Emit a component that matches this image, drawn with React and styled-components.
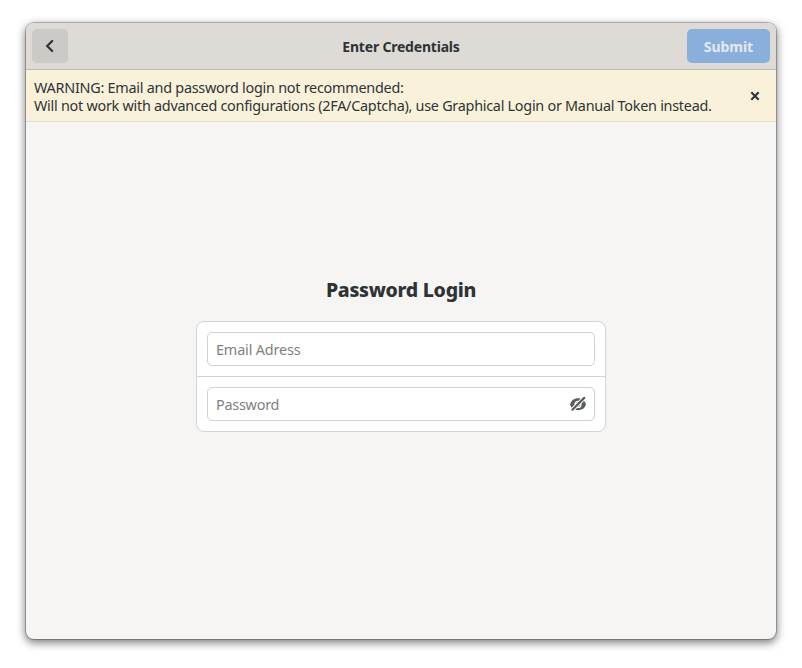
import React from "react";
import styled, { createGlobalStyle } from "styled-components";

const GlobalStyle = createGlobalStyle`
  * { box-sizing: border-box; }
  body { margin: 0; background: #fff; overflow: hidden; }
  button, input { font: inherit; }
`;

const Desktop = styled.div`
  width: 802px;
  height: 668px;
  padding: 23px 26px 29px;
  font-family: "Noto Sans", "Open Sans", sans-serif;
  font-size: 14.4px;
  color: #2e3436;
`;

const Window = styled.main`
  display: flex;
  flex-direction: column;
  height: 616px;
  border-radius: 8px;
  overflow: hidden;
  background: #f6f5f4;
  box-shadow: 0 3px 9px 1px rgba(0, 0, 0, 0.5), 0 0 0 1px rgba(0, 0, 0, 0.23);
`;

const HeaderBar = styled.header`
  display: grid;
  grid-template-columns: 1fr auto 1fr;
  align-items: center;
  flex: none;
  height: 47px;
  padding: 0 6px;
  background: #dedbd7;
  border-bottom: 1px solid #bfb8b1;
`;

const Title = styled.h1`
  margin: 0;
  padding-top: 1px;
  font-size: 14px;
  line-height: 21px;
  font-weight: 700;
  letter-spacing: -0.2px;
`;

const HeaderButton = styled.button`
  display: flex;
  align-items: center;
  justify-content: center;
  height: 34px;
  padding: 0;
  border: 0;
  border-radius: 5px;
`;

const BackButton = styled(HeaderButton)`
  width: 36px;
  background: #cccac6;
  color: #2e3436;
`;

const SubmitButton = styled(HeaderButton)`
  justify-self: end;
  width: 83px;
  background: #8bafdd;
  color: #e4e9ef;
  font-size: 14px;
  font-weight: 700;
  letter-spacing: -0.05px;
`;

const Banner = styled.section`
  display: flex;
  align-items: center;
  flex: none;
  height: 52px;
  padding: 1px 13px 0 8px;
  background: #faf1da;
  border-bottom: 1px solid #e5dcc5;
`;

const BannerText = styled.p`
  flex: 1;
  margin: 0;
  padding-top: 2px;
  line-height: 18px;
  white-space: nowrap;
`;

const Line = styled.span`
  display: block;
  letter-spacing: ${(p) => p.$tracking}px;
`;

const CloseButton = styled.button`
  display: flex;
  width: 16px;
  height: 16px;
  padding: 0;
  border: 0;
  background: none;
  color: #2e3436;
`;

const Content = styled.div`
  display: flex;
  flex-direction: column;
  align-items: center;
  flex: 1;
  padding-top: 154px;
`;

const Heading = styled.h2`
  margin: 0 0 17px;
  font-size: 19.5px;
  line-height: 28px;
  font-weight: 800;
  letter-spacing: -0.28px;
`;

const Card = styled.form`
  width: 410px;
  border: 1px solid #d7d3ce;
  border-radius: 8px;
  background: #fff;
`;

const Row = styled.div`
  padding: 10px;
  & + & { border-top: 1px solid #d5d2ce; }
`;

const Field = styled.label`
  display: flex;
  align-items: center;
  height: 34px;
  padding: 0 8px;
  border: 1px solid #d3cfca;
  border-radius: 5px;
`;

const Input = styled.input`
  flex: 1;
  min-width: 0;
  padding: 0;
  border: 0;
  outline: 0;
  background: none;
  letter-spacing: ${(p) => p.$tracking}px;
  &::placeholder { color: #7f8080; opacity: 1; }
`;

const Icon = styled.svg`
  display: block;
  flex: none;
  width: 16px;
  height: 16px;
`;

export default function App() {
  return (
    <>
      <GlobalStyle />
      <Desktop>
        <Window>
          <HeaderBar>
            <BackButton aria-label="Back">
              <Icon viewBox="0 0 16 16">
                <path d="M10.2 3 L5.2 8 L10.2 13" fill="none" stroke="currentColor" strokeWidth="2.2" strokeLinecap="round" />
              </Icon>
            </BackButton>
            <Title>Enter Credentials</Title>
            <SubmitButton disabled>Submit</SubmitButton>
          </HeaderBar>
          <Banner>
            <BannerText>
              <Line $tracking={-0.25}>WARNING: Email and password login not recommended:</Line>
              <Line $tracking={-0.265}>
                Will not work with advanced configurations (2FA/Captcha), use Graphical Login or Manual Token instead.
              </Line>
            </BannerText>
            <CloseButton aria-label="Close">
              <Icon viewBox="0 0 16 16">
                <path d="M4.3 4.3 L11.7 11.7 M11.7 4.3 L4.3 11.7" stroke="currentColor" strokeWidth="2.1" />
              </Icon>
            </CloseButton>
          </Banner>
          <Content>
            <Heading>Password Login</Heading>
            <Card>
              <Row>
                <Field>
                  <Input placeholder="Email Adress" $tracking={-0.15} />
                </Field>
              </Row>
              <Row>
                <Field>
                  <Input type="password" placeholder="Password" $tracking={-0.24} />
                  <Icon viewBox="0 0 16 16" color="#585d5e">
                    <path
                      d="M0.1 8.5 C1 4.4 4.2 2.3 8 2.3 C11.8 2.3 15 4.4 15.9 8.5 C15 12.2 11.8 14.2 8 14.2 C4.2 14.2 1 12.2 0.1 8.5 Z"
                      fill="currentColor"
                    />
                    <circle cx="8" cy="8.4" r="3" fill="none" stroke="#fff" strokeWidth="1.2" />
                    <path d="M1 15.1 L15.2 0.9" stroke="#fff" strokeWidth="4.2" />
                    <path d="M2.4 13.7 L14.2 1.9" stroke="currentColor" strokeWidth="2.2" strokeLinecap="round" />
                  </Icon>
                </Field>
              </Row>
            </Card>
          </Content>
        </Window>
      </Desktop>
    </>
  );
}
